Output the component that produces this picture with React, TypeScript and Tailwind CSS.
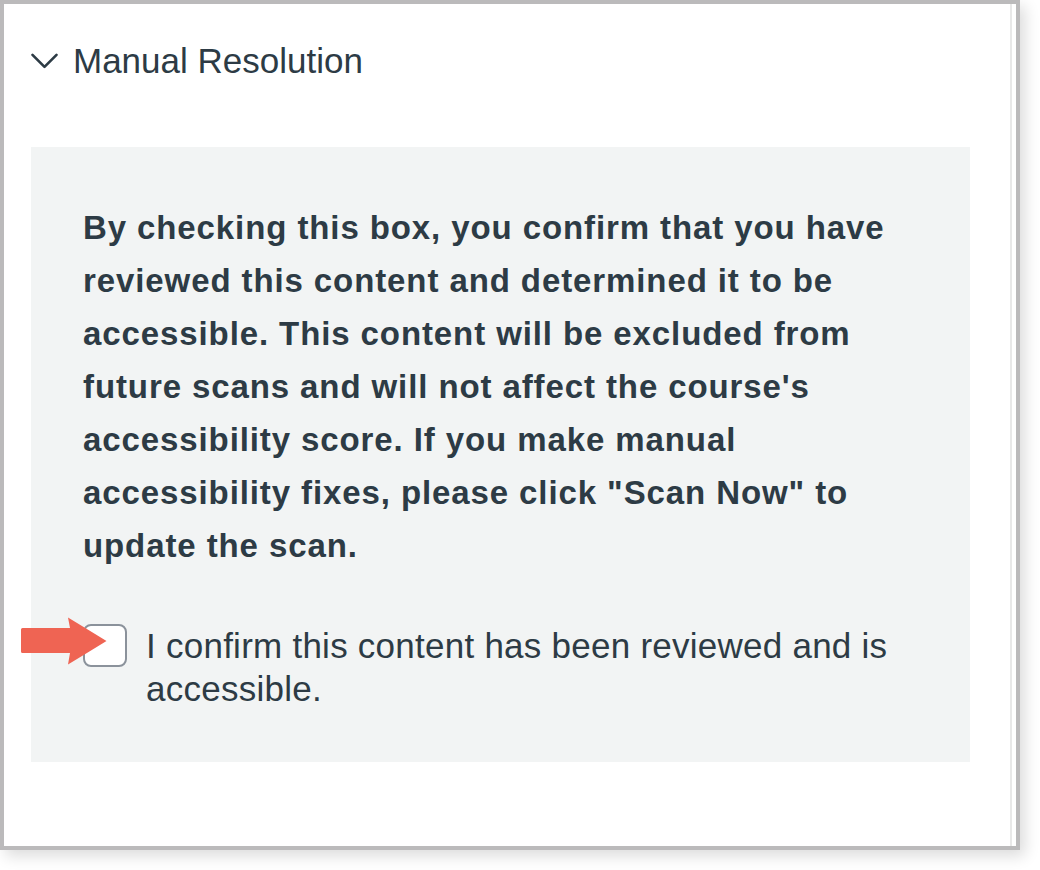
import React from 'react';

function Chevron() {
  return (
    <svg width="27" height="16" viewBox="0 0 27 16" fill="none" className="shrink-0">
      <path d="M1.5 1.8 L13.5 13.8 L25.5 1.8" stroke="#2d3b45" strokeWidth="2.6" strokeLinecap="round" strokeLinejoin="round" />
    </svg>
  );
}

function PointerArrow() {
  return (
    <svg width="88" height="50" viewBox="0 0 88 50" className="absolute left-[-62px] top-[-8px]">
      <path
        d="M1.5 12 L49 12 L47 1.5 Q66 13 85.5 25 Q66 37 47 48.5 L49 37 L1.5 37 Q0 37 0 35.5 L0 13.5 Q0 12 1.5 12 Z"
        fill="#ef6453"
      />
    </svg>
  );
}

export default function App() {
  const [checked, setChecked] = React.useState(false);

  return (
    <div className="w-[1040px] h-[870px] bg-white font-['Liberation_Sans',Arial,sans-serif] text-[#2d3b45]">
      <div className="w-[1020px] h-[850px] border-4 border-[#bbbabb] shadow-[5px_6px_14px_rgba(0,0,0,0.14)] flex bg-white">
        <div className="flex-1 flex flex-col">
          <div className="flex items-start pl-[27px] pt-[37px] h-[143px]">
            <button type="button" className="flex items-start gap-[15px] text-[35px] leading-[40px] text-[#2d3b45]">
              <span className="pt-[12px]"><Chevron /></span>
              <span>Manual Resolution</span>
            </button>
          </div>
          <div className="ml-[27px] mr-[40px] bg-[#f2f4f4] pt-[54px] pb-[52px] px-[52px]">
            <p className="text-[33px] leading-[53px] font-bold tracking-[0.9px]">
              By checking this box, you confirm that you have reviewed this content and determined it to be
              accessible. This content will be excluded from future scans and will not affect the course's
              accessibility score. If you make manual accessibility fixes, please click "Scan Now" to update
              the scan.
            </p>
            <label className="relative mt-[52px] flex items-start gap-[19px] cursor-pointer">
              <PointerArrow />
              <input
                type="checkbox"
                checked={checked}
                onChange={e => setChecked(e.target.checked)}
                className="appearance-none shrink-0 w-[44px] h-[43px] rounded-[8px] border-2 border-[#8b929b] bg-white checked:bg-[#2d3b45]"
              />
              <span className="text-[35px] leading-[43px] tracking-[0.25px]">
                I confirm this content has been reviewed and is accessible.
              </span>
            </label>
          </div>
        </div>
        <div className="w-[6px] border-l-2 border-[#e8e8e8]" />
      </div>
    </div>
  );
}
